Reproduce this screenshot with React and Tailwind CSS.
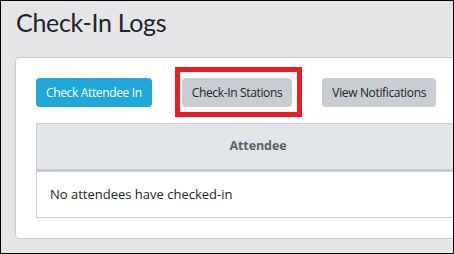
import React from "react";

const btn = "h-[29px] px-[10px] rounded-[4px] text-[12px] tracking-[-0.35px] leading-none flex items-center whitespace-nowrap";

export default function App() {
  return (
    <div className="w-[454px] h-[254px] border border-black bg-[#e4e5e7] overflow-hidden font-['Open_Sans',sans-serif]">
      <div className="pl-[14px] w-[560px]">
        <h1 className="pl-[1px] pt-[4px] h-[56px] font-['Lato',sans-serif] text-[25px] tracking-[-0.3px] leading-[34px] text-[#212529]">Check-In Logs</h1>
        <div className="bg-white border border-[#c9ccd0] rounded-[4px] px-[20px] pt-[20px] pb-[20px]">
          <div className="flex gap-[30px]">
            <button className={`${btn} bg-[#1fa8d9] text-white`}>Check Attendee In</button>
            <div className="relative">
              <button className={`${btn} bg-[#c9cdd2] text-[#212529]`}>Check-In Stations</button>
              <span className="absolute left-[-7px] right-[-10px] top-[-11px] bottom-[-10px] border-[5px] border-[#ec1c24] pointer-events-none" />
            </div>
            <button className={`${btn} bg-[#c9cdd2] text-[#212529]`}>View Notifications</button>
          </div>
          <table className="mt-[16px] w-[444px] border border-[#ccd0d4] border-collapse">
            <thead>
              <tr className="bg-[#e2e5e8] border-b-[3px] border-[#c8ccd1]">
                <th className="h-[47px] text-[12.5px] tracking-[-0.1px] font-bold text-[#5a6168] text-center">Attendee</th>
              </tr>
            </thead>
            <tbody>
              <tr>
                <td className="h-[47px] px-[13px] text-[13px] text-[#212529]">No attendees have checked-in</td>
              </tr>
            </tbody>
          </table>
        </div>
      </div>
    </div>
  );
}
